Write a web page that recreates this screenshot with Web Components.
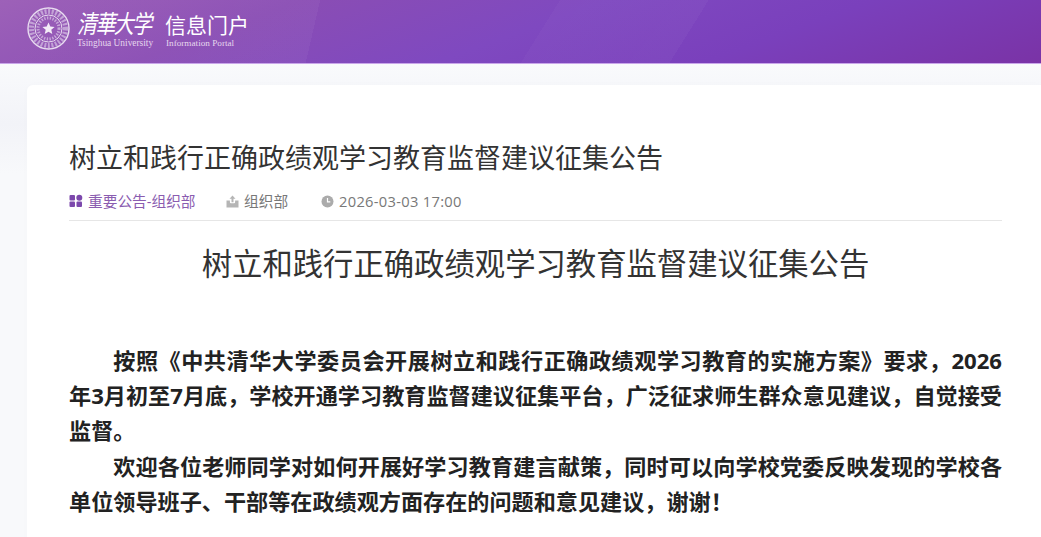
<!DOCTYPE html>
<html lang="zh">
<head>
<meta charset="utf-8">
<style>
  html, body { margin: 0; height: 537px; overflow: hidden; }
  body { background: #fff; font-family: "Open Sans", "Noto Sans CJK SC", sans-serif; }
</style>
</head>
<body>
<portal-header></portal-header>
<portal-page>
  <portal-article>
    <span slot="title">树立和践行正确政绩观学习教育监督建议征集公告</span>
    <portal-meta slot="meta"></portal-meta>
    <p>按照《中共清华大学委员会开展树立和践行正确政绩观学习教育的实施方案》要求，2026年3月初至7月底，学校开通学习教育监督建议征集平台，广泛征求师生群众意见建议，自觉接受监督。</p>
    <p>欢迎各位老师同学对如何开展好学习教育建言献策，同时可以向学校党委反映发现的学校各单位领导班子、干部等在政绩观方面存在的问题和意见建议，谢谢！</p>
  </portal-article>
</portal-page>
<script>
class PortalHeader extends HTMLElement {
  constructor() {
    super();
    this.attachShadow({ mode: "open" });
    this.shadowRoot.innerHTML = `
      <style>
        :host { display: block; height: 63px; border-bottom: 1px solid #c9a6ea; overflow: hidden;
          background:
            linear-gradient(122deg, transparent 475px, rgba(255,255,255,.022) 475px, rgba(255,255,255,.03) 601px, transparent 601px),
            linear-gradient(103deg, rgba(255,255,255,.03) 0, rgba(255,255,255,.04) 312px, transparent 312px),
            linear-gradient(160deg, #9a5cb6 0%, #8a4db4 25%, #7f49c0 50%, #7a40bc 72%, #7a33a6 100%); }
        .bar { display: flex; height: 63px; padding-left: 27px; color: #fff; }
        svg { display: block; flex: none; margin-top: 7px; }
        .name { margin-left: 7px; width: 88px; padding-top: 10px; }
        .cn { font: italic 400 20px/20px "Noto Sans CJK SC", sans-serif; letter-spacing: -1.6px; white-space: nowrap; transform: scaleY(1.25); transform-origin: top left; height: 27px; }
        .en, .sub { font: 9.4px/12px "Liberation Serif", serif; color: #e6d6ee; white-space: nowrap; }
        .portal { padding-top: 11px; }
        .big { font: 400 21px/26px "Noto Sans CJK SC", sans-serif; white-space: nowrap; }
        .sub { font-size: 9.2px; padding-left: 1px; }
      </style>
      <div class="bar">
        <svg width="43" height="43" viewBox="0 0 43 43" fill="none" stroke="#e8dcf0">
          <circle cx="21.5" cy="21.5" r="20.5" stroke-width="1.4"/>
          <circle cx="21.5" cy="21.5" r="13.5" stroke-width="1"/>
          <circle cx="21.5" cy="21.5" r="17" stroke-width="5" stroke-dasharray="2 1.6" opacity=".55"/>
          <circle cx="21.5" cy="21.5" r="10.5" stroke-width="3" stroke-dasharray="1.4 1.4" opacity=".6"/>
          <path d="M21.5 15.5l1.8 4 4.3.4-3.3 2.8 1 4.2-3.8-2.2-3.8 2.2 1-4.2-3.3-2.8 4.3-.4z" fill="#f3ecf7" stroke="none"/>
        </svg>
        <div class="name">
          <div class="cn">清華大学</div>
          <div class="en">Tsinghua University</div>
        </div>
        <div class="portal">
          <div class="big">信息门户</div>
          <div class="sub">Information Portal</div>
        </div>
      </div>`;
  }
}
customElements.define("portal-header", PortalHeader);

class PortalPage extends HTMLElement {
  constructor() {
    super();
    this.attachShadow({ mode: "open" });
    this.shadowRoot.innerHTML = `
      <style>
        :host { display: block; height: 473px; padding: 21px 0 0 27px; box-sizing: border-box; overflow: hidden;
          background: linear-gradient(#f9fafc, #f2f3f8 60px, #f8f9fb 110px); }
        .card { background: #fff; width: 1014px; min-height: 480px; border-radius: 6px 0 0 0; box-sizing: border-box; padding: 0 39px 0 42px; box-shadow: 0 0 8px rgba(0,0,0,.015); }
      </style>
      <div class="card"><slot></slot></div>`;
  }
}
customElements.define("portal-page", PortalPage);

class PortalMeta extends HTMLElement {
  constructor() {
    super();
    this.attachShadow({ mode: "open" });
    this.shadowRoot.innerHTML = `
      <style>
        :host { display: flex; align-items: center; height: 20px; font: 14.7px/20px "Open Sans", "Noto Sans CJK SC", sans-serif; color: #787878; white-space: nowrap; }
        span { display: inline-flex; align-items: center; }
        svg { display: block; flex: none; margin-right: 5px; }
        .cat { color: #8a5cb0; width: 157px; }
        .dept { width: 95px; }
        .date { letter-spacing: .3px; }
      </style>
      <span class="cat">
        <svg width="14" height="14" viewBox="0 0 14 14" fill="#7c48ac">
          <rect x="0.5" y="1" width="5.5" height="5.5" rx="1"/><rect x="0.5" y="7.5" width="5.5" height="5.5" rx="1"/>
          <rect x="7.5" y="7.5" width="5.5" height="5.5" rx="1"/><circle cx="10.3" cy="3.7" r="3"/>
        </svg>重要公告-组织部</span>
      <span class="dept">
        <svg width="13" height="13" viewBox="0 0 13 13" fill="#b5b5b5">
          <path d="M0.5 5.5h3.4v1.8a1 1 0 0 0 1 1h3.2a1 1 0 0 0 1-1V5.5h3.4v7h-12z"/><path d="M6.5 .5l3 3.2H7.5v3.6H5.5V3.7H3.5z"/>
        </svg>组织部</span>
      <span class="date">
        <svg width="13" height="13" viewBox="0 0 13 13">
          <circle cx="6.5" cy="6.5" r="6" fill="#ababab"/><path d="M6.5 3v3.8h2.8" fill="none" stroke="#fff" stroke-width="1.2"/>
        </svg>2026-03-03 17:00</span>`;
  }
}
customElements.define("portal-meta", PortalMeta);

class PortalArticle extends HTMLElement {
  constructor() {
    super();
    this.attachShadow({ mode: "open" });
    const titulo = this.querySelector('[slot="title"]').textContent;
    this.shadowRoot.innerHTML = `
      <style>
        :host { display: block; }
        h1 { margin: 0; padding-top: 53px; font: 400 27px/40px "Open Sans", "Noto Sans CJK SC", sans-serif; color: #333; white-space: nowrap; }
        .meta { margin-top: 13px; padding-bottom: 9px; border-bottom: 1px solid #e6e6e6; }
        h2 { margin: 0; padding-top: 21px; text-align: center; font: 400 30.35px/44px "Open Sans", "Noto Sans CJK SC", sans-serif; color: #333; }
        .body { margin-top: 57px; font: 700 22.13px/35.2px "Open Sans", "Noto Sans CJK SC", sans-serif; color: #222; text-align: justify; }
        ::slotted(p) { margin: 0; text-indent: 2em; }
      </style>
      <h1><slot name="title"></slot></h1>
      <div class="meta"><slot name="meta"></slot></div>
      <h2>${titulo}</h2>
      <div class="body"><slot></slot></div>`;
  }
}
customElements.define("portal-article", PortalArticle);
</script>
</body>
</html>
